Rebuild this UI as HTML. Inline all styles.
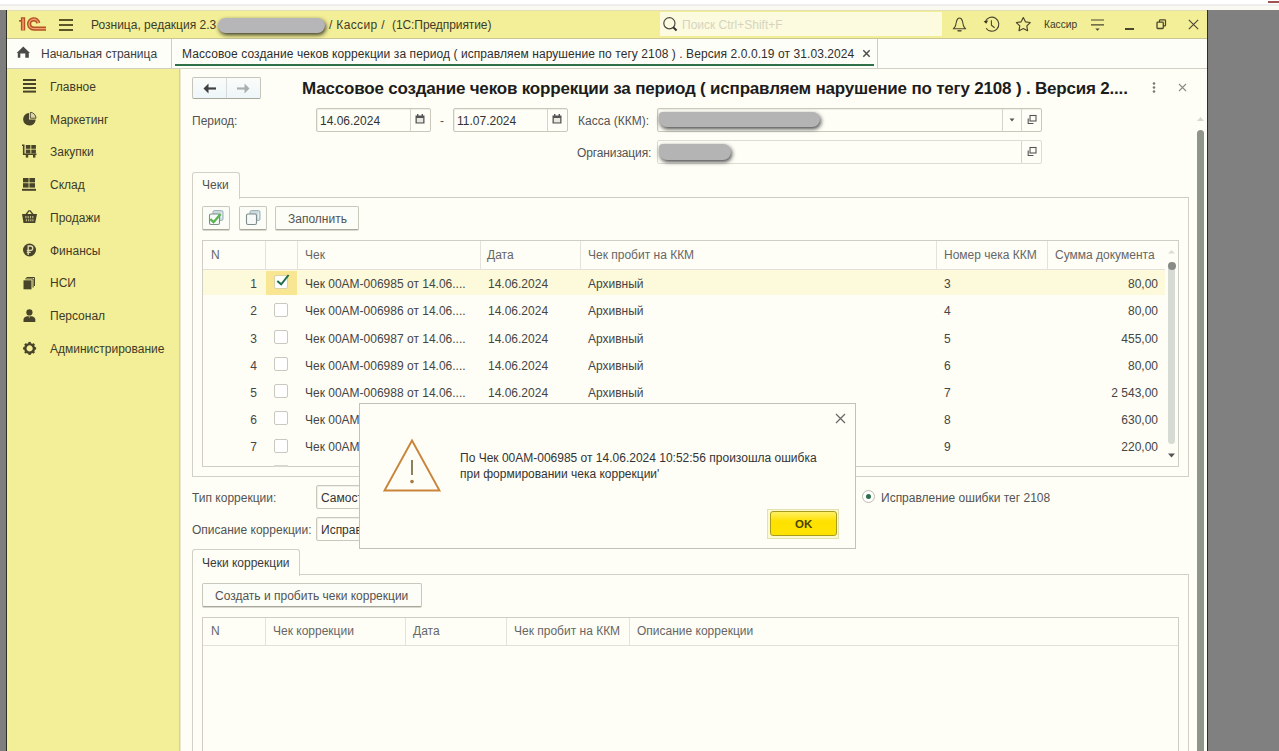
<!DOCTYPE html>
<html><head><meta charset="utf-8">
<style>
*{margin:0;padding:0;box-sizing:border-box}
html,body{width:1279px;height:751px;overflow:hidden;background:#fff}
body{position:relative;font-family:"Liberation Sans",sans-serif;font-size:12px;color:#535353}
.a{position:absolute}
.t{position:absolute;white-space:pre;line-height:14px}
.fld{border:1px solid #cac8bb;border-radius:2px;background:#fefef6;box-shadow:inset 1px 1px 0 #efeee6}
.btn{border:1px solid #c9c8bd;border-bottom-color:#a9a89c;border-radius:2px;background:#fdfdf7;box-shadow:0 1px 0 #d9d8ce}
.chk{width:14px;height:14px;border:1px solid #c9c9c0;border-radius:2px;background:#fff}
.blob{border-radius:4px 8px 8px 8px;background:#b4b4b4;box-shadow:1px 2px 4px #444}
</style></head><body>
<!-- top strip -->
<div class="a" style="left:0;top:4px;width:1279px;height:2px;background:#eeeeee"></div>
<div class="a" style="left:1268px;top:1px;width:11px;height:2px;background:#a05252"></div>
<!-- left gray -->
<div class="a" style="left:0;top:10px;width:6px;height:741px;background:#7e7e7e"></div>
<div class="a" style="left:6px;top:10px;width:1px;height:741px;background:#2e2e22"></div>
<!-- right gray -->
<div class="a" style="left:1207px;top:10px;width:1px;height:741px;background:#2e2e22"></div>
<div class="a" style="left:1208px;top:10px;width:71px;height:741px;background:#808080"></div>

<!-- header -->
<div class="a" style="left:0;top:6px;width:1279px;height:4px;background:#f9f9f2"></div>
<div class="a" style="left:7px;top:10px;width:1200px;height:29px;background:#f3ee98;border-top:1px solid #e3dfb2;border-bottom:1px solid #c9c597"></div>

<!-- 1C logo -->
<svg class="a" style="left:14px;top:12px" width="40" height="24" viewBox="14 12 40 24">
  <path d="M19.1 19.9 H20.9 V17.3 H25.2 V30.6 H20.9 V21.7 H19.1Z" fill="#b4551f"/>
  <rect x="22.3" y="18.6" width="1.5" height="12" fill="#f59b7c"/>
  <path d="M33.65 28.6 A4.65 4.65 0 1 1 38.3 23.2 M33.5 28.6 H46" fill="none" stroke="#b4551f" stroke-width="4.2"/>
  <path d="M33.65 28.6 A4.65 4.65 0 1 1 38.3 23.2 M33.5 28.6 H46" fill="none" stroke="#f59b7c" stroke-width="1.4"/>
</svg>
<!-- hamburger -->
<div class="a" style="left:59px;top:19px;width:14px;height:1.5px;background:#5d5627"></div>
<div class="a" style="left:59px;top:24px;width:14px;height:1.5px;background:#5d5627"></div>
<div class="a" style="left:59px;top:29px;width:14px;height:1.5px;background:#5d5627"></div>
<div class="t" style="left:91px;top:18px;color:#3e3b28">Розница, редакция 2.3</div>
<div class="a" style="left:218px;top:18px;width:107px;height:15px;border-radius:8px;background:#b6b6b8;box-shadow:1px 2px 4px #3a3a28"></div>
<div class="t" style="left:329px;top:18px;color:#3e3b28;letter-spacing:0.35px">/ Кассир /</div>
<div class="t" style="left:392px;top:18px;color:#3e3b28;letter-spacing:-0.08px">(1С:Предприятие)</div>
<!-- search -->
<div class="a" style="left:660px;top:12px;width:282px;height:24px;background:#fcfbdf"></div>
<svg class="a" style="left:662px;top:16px" width="16" height="16" viewBox="0 0 16 16"><circle cx="7.4" cy="7.3" r="5.6" fill="none" stroke="#4a4a44" stroke-width="1.2"/><path d="M11.2 11.2 L14.6 14.4" stroke="#333" stroke-width="2"/></svg>
<div class="t" style="left:682px;top:18px;color:#d6d4c0">Поиск Ctrl+Shift+F</div>
<!-- right icons -->
<svg class="a" style="left:952px;top:17px" width="15" height="16" viewBox="0 0 15 16"><path d="M7.5 1 C6.2 1 5.2 2 4.6 4 L3.6 8.5 C3.2 10 2.5 10.8 1.3 11.8 H13.7 C12.5 10.8 11.8 10 11.4 8.5 L10.4 4 C9.8 2 8.8 1 7.5 1Z" fill="none" stroke="#4a4630" stroke-width="1.1" stroke-linejoin="round"/><path d="M5.5 13.8 H9.5" stroke="#4a4630" stroke-width="1.4"/></svg>
<svg class="a" style="left:980px;top:14px" width="22" height="20" viewBox="980 14 22 20"><path d="M985.27 21.69 A7 7 0 1 1 986.07 28.22" fill="none" stroke="#4a4630" stroke-width="1.15"/><path d="M983.6 21.2 L988.2 20.6 L986.2 23.8Z" fill="#3a3620"/><path d="M991.4 20.2 V25.2 L994.6 27.8" fill="none" stroke="#4a4630" stroke-width="1.1"/></svg>
<svg class="a" style="left:1014px;top:15px" width="18" height="18" viewBox="1014 15 18 18"><path d="M1023.30 17.50 L1025.47 21.81 L1030.24 22.54 L1026.82 25.94 L1027.59 30.71 L1023.30 28.50 L1019.01 30.71 L1019.78 25.94 L1016.36 22.54 L1021.13 21.81Z" fill="none" stroke="#4a4630" stroke-width="1.15" stroke-linejoin="round"/></svg>
<div class="t" style="left:1044px;top:18px;font-size:10.2px;color:#3e3b28">Кассир</div>
<svg class="a" style="left:1090px;top:18px" width="15" height="14" viewBox="0 0 15 14"><path d="M1 2 H14 M1 6.8 H14" stroke="#4a4630" stroke-width="1.2"/><path d="M5.3 10.5 H9.7 L7.5 12.8Z" fill="#4a4630"/></svg>
<div class="a" style="left:1125px;top:28px;width:9px;height:1.5px;background:#4a4630"></div>
<svg class="a" style="left:1156px;top:19px" width="11" height="11" viewBox="0 0 11 11"><path d="M3.5 3 V1.5 Q3.5 0.8 4.2 0.8 H8.8 Q9.5 0.8 9.5 1.5 V6.2 Q9.5 6.9 8.8 6.9 H7.5" fill="none" stroke="#4a4630" stroke-width="1.2"/><rect x="1" y="3.2" width="6.3" height="6.3" rx="0.8" fill="none" stroke="#4a4630" stroke-width="1.3"/></svg>
<svg class="a" style="left:1188px;top:19px" width="11" height="11" viewBox="0 0 11 11"><path d="M0.8 0.8 L10.2 10.2 M10.2 0.8 L0.8 10.2" stroke="#4a4630" stroke-width="1.1"/></svg>


<!-- tab bar -->
<div class="a" style="left:7px;top:39px;width:1200px;height:30px;background:#fefef8;border-bottom:1px solid #d2d0c4"></div>


<!-- tab bar content -->
<svg class="a" style="left:16px;top:46px" width="15" height="13" viewBox="0 0 15 13"><path d="M7.3 0.6 L14 6.9 H12.8 V11.8 H9.3 V7.4 H4.3 V11.8 H1.8 V6.9 H0.6Z" fill="#4a4a48"/></svg>
<div class="t" style="left:41px;top:47px;color:#3c3c3c">Начальная страница</div>
<div class="a" style="left:171px;top:39px;width:1px;height:29px;background:#cfcdc2"></div>
<div class="t" style="left:182px;top:47px;color:#2e2e2e;letter-spacing:0.08px">Массовое создание чеков коррекции за период ( исправляем нарушение по тегу 2108 ) . Версия 2.0.0.19 от 31.03.2024</div>
<svg class="a" style="left:862px;top:49px" width="9" height="9" viewBox="0 0 9 9"><path d="M1.3 1.3 L7.7 7.7 M7.7 1.3 L1.3 7.7" stroke="#4e4e4e" stroke-width="1.5"/></svg>
<div class="a" style="left:877px;top:39px;width:1px;height:29px;background:#cfcdc2"></div>
<div class="a" style="left:175px;top:64px;width:699px;height:2px;background:#2f7048"></div>
<!-- sidebar -->
<div class="a" style="left:7px;top:69px;width:173px;height:682px;background:#f3ee98;border-right:1px solid #d3d0a2"></div>


<!-- sidebar items -->
<div class="t" style="left:50px;top:80px;color:#3e3b28">Главное</div>
<div class="t" style="left:50px;top:113px;color:#3e3b28">Маркетинг</div>
<div class="t" style="left:50px;top:145px;color:#3e3b28">Закупки</div>
<div class="t" style="left:50px;top:178px;color:#3e3b28">Склад</div>
<div class="t" style="left:50px;top:211px;color:#3e3b28">Продажи</div>
<div class="t" style="left:50px;top:244px;color:#3e3b28">Финансы</div>
<div class="t" style="left:50px;top:276px;color:#3e3b28">НСИ</div>
<div class="t" style="left:50px;top:309px;color:#3e3b28">Персонал</div>
<div class="t" style="left:50px;top:342px;color:#3e3b28">Администрирование</div>

<!-- sidebar icons -->
<svg class="a" style="left:22px;top:78px" width="16" height="16" viewBox="0 0 16 16"><g fill="#48442a"><rect x="1" y="1" width="13" height="2"/><rect x="1" y="5" width="13" height="2"/><rect x="1" y="9" width="13" height="2"/><rect x="1" y="12.6" width="13" height="2"/></g></svg>
<svg class="a" style="left:22px;top:111px" width="16" height="16" viewBox="0 0 16 16"><path d="M7 2 A6.3 6.3 0 1 0 13.7 8.6 H7Z" fill="#48442a"/><path d="M8.3 1.3 A6 6 0 0 1 14 7.2 H8.3Z" fill="#dcd7a8" stroke="#48442a" stroke-width="0.9"/></svg>
<svg class="a" style="left:21px;top:143px" width="17" height="16" viewBox="0 0 17 16"><path d="M1 2.3 H2.7 V11.3 H15.5" fill="none" stroke="#48442a" stroke-width="1.6"/><g fill="#48442a"><rect x="4.8" y="2" width="4.6" height="3.8"/><rect x="10.3" y="2" width="4.6" height="3.8"/><rect x="4.8" y="6.6" width="4.6" height="3.8"/><rect x="10.3" y="6.6" width="4.6" height="3.8"/><rect x="4.8" y="12" width="2.4" height="2.6"/><rect x="12" y="12" width="2.4" height="2.6"/></g></svg>
<svg class="a" style="left:22px;top:177px" width="16" height="16" viewBox="0 0 16 16"><g fill="#48442a"><rect x="1" y="1" width="5.6" height="4.4"/><rect x="7.4" y="1" width="5.6" height="4.4"/><rect x="1" y="6.2" width="5.6" height="4.4"/><rect x="7.4" y="6.2" width="5.6" height="4.4"/><rect x="0" y="11.8" width="14" height="2"/></g></svg>
<svg class="a" style="left:21px;top:209px" width="17" height="16" viewBox="0 0 17 16"><path d="M5 5.5 L7.8 1.8 H9.2 L12 5.5" fill="none" stroke="#48442a" stroke-width="1.3"/><path d="M1 5 H16 L14.2 14 H2.5Z" fill="#48442a"/><g fill="#b9b48a"><rect x="4.3" y="7" width="1.2" height="2.3"/><rect x="6.6" y="7" width="1.2" height="2.3"/><rect x="8.9" y="7" width="1.2" height="2.3"/><rect x="11.2" y="7" width="1.2" height="2.3"/><rect x="4.8" y="10.3" width="1.2" height="2"/><rect x="7" y="10.3" width="1.2" height="2"/><rect x="9.2" y="10.3" width="1.2" height="2"/><rect x="11.3" y="10.3" width="1.2" height="2"/></g></svg>
<svg class="a" style="left:22px;top:242px" width="16" height="16" viewBox="0 0 16 16"><circle cx="7.5" cy="8" r="6.5" fill="#48442a"/><path d="M6.2 13 V4 H8.6 A2.1 2.1 0 0 1 8.6 8.3 H4.8 M4.8 10.3 H8.6" fill="none" stroke="#e2ddb0" stroke-width="1.3"/></svg>
<svg class="a" style="left:22px;top:275px" width="16" height="16" viewBox="0 0 16 16"><path d="M4.5 2.5 H12.5 V11" fill="none" stroke="#48442a" stroke-width="1"/><path d="M3.2 3.9 H11.1 V12.6" fill="none" stroke="#48442a" stroke-width="1"/><rect x="1.5" y="5.3" width="8" height="9" fill="#48442a"/></svg>
<svg class="a" style="left:22px;top:307px" width="16" height="16" viewBox="0 0 16 16"><circle cx="7.4" cy="5.4" r="3.1" fill="#48442a"/><path d="M1.5 15 V12.5 C1.5 10.8 3.5 9.3 5.5 9.3 H9.3 C11.3 9.3 13.3 10.8 13.3 12.5 V15Z" fill="#48442a"/><path d="M6.3 9.3 L7.4 11 L8.5 9.3" fill="#b9b48a"/></svg>
<svg class="a" style="left:22px;top:341px" width="16" height="16" viewBox="0 0 16 16"><g transform="translate(7.6 7.4)"><circle r="4.3" fill="none" stroke="#48442a" stroke-width="2.4"/><g fill="#48442a"><rect x="-1.2" y="-6.5" width="2.4" height="3"/><rect x="-1.2" y="-6.5" width="2.4" height="3" transform="rotate(45)"/><rect x="-1.2" y="-6.5" width="2.4" height="3" transform="rotate(90)"/><rect x="-1.2" y="-6.5" width="2.4" height="3" transform="rotate(135)"/><rect x="-1.2" y="-6.5" width="2.4" height="3" transform="rotate(180)"/><rect x="-1.2" y="-6.5" width="2.4" height="3" transform="rotate(225)"/><rect x="-1.2" y="-6.5" width="2.4" height="3" transform="rotate(270)"/><rect x="-1.2" y="-6.5" width="2.4" height="3" transform="rotate(315)"/></g></g></svg>
<!-- content -->
<div class="a" style="left:180px;top:69px;width:1px;height:682px;background:#ebe9cf"></div>
<div class="a" style="left:181px;top:69px;width:1026px;height:682px;background:#fefef6"></div>


<!-- ===== form header ===== -->
<div class="a" style="left:192px;top:77px;width:69px;height:22px;border:1px solid #c6c5bb;border-bottom-color:#a9a89e;border-radius:2px;background:linear-gradient(#fbfcfa,#eef6f9)"></div>
<div class="a" style="left:226px;top:78px;width:1px;height:20px;background:#d6dad8"></div>
<svg class="a" style="left:203px;top:83px" width="14" height="11" viewBox="0 0 14 11"><path d="M13 5.5 H4" stroke="#404040" stroke-width="2.2"/><path d="M0.5 5.5 L5.5 0.6 V10.4Z" fill="#404040"/></svg>
<svg class="a" style="left:236px;top:83px" width="14" height="11" viewBox="0 0 14 11"><path d="M1 5.5 H10" stroke="#a9afaf" stroke-width="2.2"/><path d="M13.5 5.5 L8.5 0.6 V10.4Z" fill="#a9afaf"/></svg>
<div class="t" style="left:302px;top:79px;font-size:17px;font-weight:bold;line-height:20px;color:#1c1c1c;letter-spacing:-0.19px">Массовое создание чеков коррекции за период ( исправляем нарушение по тегу 2108 ) . Версия 2....</div>
<svg class="a" style="left:1152px;top:81px" width="4" height="13" viewBox="0 0 4 13"><circle cx="2" cy="2.5" r="1.3" fill="#777"/><circle cx="2" cy="6.5" r="1.3" fill="#777"/><circle cx="2" cy="10.5" r="1.3" fill="#777"/></svg>
<svg class="a" style="left:1178px;top:83px" width="9" height="9" viewBox="0 0 9 9"><path d="M1 1 L8 8 M8 1 L1 8" stroke="#8a8a8a" stroke-width="1.1"/></svg>

<div class="t" style="left:192px;top:114px">Период:</div>
<div class="a fld" style="left:316px;top:108px;width:115px;height:24px"></div>
<div class="a" style="left:410px;top:109px;width:1px;height:22px;background:#d6d4c8"></div>
<div class="t" style="left:320px;top:114px;color:#333">14.06.2024</div>
<svg class="a cal" style="left:415px;top:114px" width="10" height="10" viewBox="0 0 10 10"><rect x="0.5" y="1.5" width="9" height="8" fill="#555"/><rect x="1.8" y="4" width="6.4" height="4.4" fill="#e9e8e0"/><rect x="2" y="0" width="1.4" height="2.5" fill="#555"/><rect x="6.6" y="0" width="1.4" height="2.5" fill="#555"/></svg>
<div class="t" style="left:440px;top:114px">-</div>
<div class="a fld" style="left:453px;top:108px;width:115px;height:24px"></div>
<div class="a" style="left:547px;top:109px;width:1px;height:22px;background:#d6d4c8"></div>
<div class="t" style="left:457px;top:114px;color:#333">11.07.2024</div>
<svg class="a cal" style="left:552px;top:114px" width="10" height="10" viewBox="0 0 10 10"><rect x="0.5" y="1.5" width="9" height="8" fill="#555"/><rect x="1.8" y="4" width="6.4" height="4.4" fill="#e9e8e0"/><rect x="2" y="0" width="1.4" height="2.5" fill="#555"/><rect x="6.6" y="0" width="1.4" height="2.5" fill="#555"/></svg>

<div class="t" style="left:578px;top:114px">Касса (ККМ):</div>
<div class="a fld" style="left:657px;top:108px;width:385px;height:24px"></div>
<div class="a" style="left:1002px;top:109px;width:1px;height:22px;background:#d6d4c8"></div>
<div class="a" style="left:1021px;top:109px;width:1px;height:22px;background:#d6d4c8"></div>
<svg class="a" style="left:1009px;top:118px" width="6" height="4" viewBox="0 0 6 4"><path d="M0.5 0.5 H5.5 L3 3.5Z" fill="#555"/></svg>
<svg class="a opn" style="left:1027px;top:114px" width="11" height="11" viewBox="0 0 11 11"><rect x="3" y="1.5" width="6" height="5.5" fill="none" stroke="#555" stroke-width="1.1"/><path d="M1.2 4.5 V9.5 H6.5" fill="none" stroke="#555" stroke-width="1.1"/></svg>
<div class="a blob" style="left:659px;top:112px;width:161px;height:15px"></div>

<div class="t" style="left:577px;top:146px;letter-spacing:-0.12px">Организация:</div>
<div class="a fld" style="left:657px;top:140px;width:385px;height:24px;border-color:#dddcd2;box-shadow:none"></div>
<div class="a" style="left:1021px;top:141px;width:1px;height:22px;background:#d6d4c8"></div>
<svg class="a opn" style="left:1027px;top:146px" width="11" height="11" viewBox="0 0 11 11"><rect x="3" y="1.5" width="6" height="5.5" fill="none" stroke="#555" stroke-width="1.1"/><path d="M1.2 4.5 V9.5 H6.5" fill="none" stroke="#555" stroke-width="1.1"/></svg>
<div class="a blob" style="left:659px;top:144px;width:72px;height:16px"></div>

<!-- outer scrollbar -->
<svg class="a" style="left:1196px;top:116px" width="9" height="6" viewBox="0 0 9 6"><path d="M1 5 L4.5 1 L8 5Z" fill="#d8d8d0"/></svg>
<div class="a" style="left:1197px;top:130px;width:7px;height:621px;border-radius:3.5px 3.5px 0 0;background:#8f958a"></div>

<!-- ===== panel 1 ===== -->
<div class="a" style="left:192px;top:197px;width:997px;height:280px;border:1px solid #d3d1c6;border-top-color:#cfcdc2"></div>
<div class="a" style="left:192px;top:172px;width:48px;height:27px;border:1px solid #d3d1c6;border-bottom:none;border-radius:3px 3px 0 0;background:#fefef6"></div>
<div class="t" style="left:202px;top:178px">Чеки</div>

<div class="a btn" style="left:202px;top:206px;width:28px;height:24px"></div>
<div class="a btn" style="left:239px;top:206px;width:28px;height:24px"></div>
<div class="a btn" style="left:275px;top:206px;width:84px;height:24px"></div>
<div class="t" style="left:288px;top:212px">Заполнить</div>
<svg class="a" style="left:208px;top:209px" width="17" height="17" viewBox="0 0 17 17"><rect x="5" y="1.5" width="10" height="10" rx="1.5" fill="#c9d9dc" stroke="#9fb3b6" stroke-width="1"/><path d="M13.3 3.5 V9.5" stroke="#f2f6f6" stroke-width="1"/><rect x="1.5" y="5" width="10" height="10.5" rx="1.5" fill="#f6f9f8" stroke="#7d8c8c" stroke-width="1.1"/><path d="M2.3 10.2 L5.6 13.2 L12.6 5" fill="none" stroke="#58b44c" stroke-width="2.3"/></svg>
<svg class="a" style="left:245px;top:209px" width="17" height="17" viewBox="0 0 17 17"><rect x="5" y="1.5" width="10" height="10" rx="1.5" fill="#c9d9dc" stroke="#9fb3b6" stroke-width="1"/><path d="M13.3 3.5 V9.5" stroke="#f2f6f6" stroke-width="1"/><rect x="1.5" y="5" width="10" height="10.5" rx="1.5" fill="#f6f9f8" stroke="#7d8c8c" stroke-width="1.1"/></svg>

<!-- table 1 -->
<div class="a" style="left:202px;top:240px;width:977px;height:227px;border:1px solid #cfcdc4;background:#fefef6"></div>
<div class="a" style="left:203px;top:269px;width:962px;height:1px;background:#e2e0d8"></div>
<div class="a" style="left:265px;top:241px;width:1px;height:28px;background:#e4e2da"></div>
<div class="a" style="left:297px;top:241px;width:1px;height:28px;background:#e4e2da"></div>
<div class="a" style="left:480px;top:241px;width:1px;height:28px;background:#e4e2da"></div>
<div class="a" style="left:580px;top:241px;width:1px;height:28px;background:#e4e2da"></div>
<div class="a" style="left:936px;top:241px;width:1px;height:28px;background:#e4e2da"></div>
<div class="a" style="left:1047px;top:241px;width:1px;height:28px;background:#e4e2da"></div>
<div class="t" style="left:211px;top:248px;color:#666">N</div>
<div class="t" style="left:305px;top:248px;color:#666">Чек</div>
<div class="t" style="left:487px;top:248px;color:#666">Дата</div>
<div class="t" style="left:588px;top:248px;color:#666">Чек пробит на ККМ</div>
<div class="t" style="left:944px;top:248px;color:#666">Номер чека ККМ</div>
<div class="t" style="left:1055px;top:248px;color:#666">Сумма документа</div>
<div class="a" style="left:203px;top:270px;width:962px;height:25px;background:#fcfada"></div>
<div class="a" style="left:266px;top:271px;width:31px;height:24px;background:#f8e692"></div>
<div class="t" style="left:203px;top:277px;width:54px;text-align:right;color:#454545">1</div>
<div class="a chk" style="left:274px;top:275px;border-color:#d9d2a6"></div>
<svg class="a" style="left:275px;top:273px" width="16" height="14" viewBox="0 0 16 14"><path d="M2.3 7.9 L6.2 11.3 L13.6 2" fill="none" stroke="#1e6e48" stroke-width="2"/></svg>
<div class="t" style="left:305px;top:277px;color:#454545">Чек 00AM-006985 от 14.06....</div>
<div class="t" style="left:488px;top:277px;color:#454545">14.06.2024</div>
<div class="t" style="left:588px;top:277px;color:#454545">Архивный</div>
<div class="t" style="left:944px;top:277px;color:#454545">3</div>
<div class="t" style="left:1056px;top:277px;width:102px;text-align:right;color:#454545">80,00</div>
<div class="t" style="left:203px;top:304px;width:54px;text-align:right;color:#454545">2</div>
<div class="a chk" style="left:274px;top:303px"></div>
<div class="t" style="left:305px;top:304px;color:#454545">Чек 00AM-006986 от 14.06....</div>
<div class="t" style="left:488px;top:304px;color:#454545">14.06.2024</div>
<div class="t" style="left:588px;top:304px;color:#454545">Архивный</div>
<div class="t" style="left:944px;top:304px;color:#454545">4</div>
<div class="t" style="left:1056px;top:304px;width:102px;text-align:right;color:#454545">80,00</div>
<div class="t" style="left:203px;top:332px;width:54px;text-align:right;color:#454545">3</div>
<div class="a chk" style="left:274px;top:330px"></div>
<div class="t" style="left:305px;top:332px;color:#454545">Чек 00AM-006987 от 14.06....</div>
<div class="t" style="left:488px;top:332px;color:#454545">14.06.2024</div>
<div class="t" style="left:588px;top:332px;color:#454545">Архивный</div>
<div class="t" style="left:944px;top:332px;color:#454545">5</div>
<div class="t" style="left:1056px;top:332px;width:102px;text-align:right;color:#454545">455,00</div>
<div class="t" style="left:203px;top:359px;width:54px;text-align:right;color:#454545">4</div>
<div class="a chk" style="left:274px;top:357px"></div>
<div class="t" style="left:305px;top:359px;color:#454545">Чек 00AM-006989 от 14.06....</div>
<div class="t" style="left:488px;top:359px;color:#454545">14.06.2024</div>
<div class="t" style="left:588px;top:359px;color:#454545">Архивный</div>
<div class="t" style="left:944px;top:359px;color:#454545">6</div>
<div class="t" style="left:1056px;top:359px;width:102px;text-align:right;color:#454545">80,00</div>
<div class="t" style="left:203px;top:386px;width:54px;text-align:right;color:#454545">5</div>
<div class="a chk" style="left:274px;top:384px"></div>
<div class="t" style="left:305px;top:386px;color:#454545">Чек 00AM-006988 от 14.06....</div>
<div class="t" style="left:488px;top:386px;color:#454545">14.06.2024</div>
<div class="t" style="left:588px;top:386px;color:#454545">Архивный</div>
<div class="t" style="left:944px;top:386px;color:#454545">7</div>
<div class="t" style="left:1056px;top:386px;width:102px;text-align:right;color:#454545">2 543,00</div>
<div class="t" style="left:203px;top:413px;width:54px;text-align:right;color:#454545">6</div>
<div class="a chk" style="left:274px;top:411px"></div>
<div class="t" style="left:305px;top:413px;color:#454545">Чек 00AM-006990 от 14.06....</div>
<div class="t" style="left:488px;top:413px;color:#454545">14.06.2024</div>
<div class="t" style="left:588px;top:413px;color:#454545">Архивный</div>
<div class="t" style="left:944px;top:413px;color:#454545">8</div>
<div class="t" style="left:1056px;top:413px;width:102px;text-align:right;color:#454545">630,00</div>
<div class="t" style="left:203px;top:440px;width:54px;text-align:right;color:#454545">7</div>
<div class="a chk" style="left:274px;top:439px"></div>
<div class="t" style="left:305px;top:440px;color:#454545">Чек 00AM-006991 от 14.06....</div>
<div class="t" style="left:488px;top:440px;color:#454545">14.06.2024</div>
<div class="t" style="left:588px;top:440px;color:#454545">Архивный</div>
<div class="t" style="left:944px;top:440px;color:#454545">9</div>
<div class="t" style="left:1056px;top:440px;width:102px;text-align:right;color:#454545">220,00</div>
<div class="a" style="left:274px;top:465px;width:14px;height:2px;background:#d8d8d0"></div>
<!-- table scroll -->
<svg class="a" style="left:1167px;top:249px" width="9" height="5" viewBox="0 0 9 5"><path d="M1 4.5 L4.5 1 L8 4.5Z" fill="#dcdcd4"/></svg>
<div class="a" style="left:1168px;top:262px;width:7px;height:182px;border-radius:3.5px;background:#d6dbd3"></div>
<div class="a" style="left:1167.5px;top:262px;width:8px;height:8px;border-radius:4px;background:#8a8c88"></div>
<svg class="a" style="left:1167px;top:453px" width="9" height="5" viewBox="0 0 9 5"><path d="M1 0.5 H8 L4.5 4.5Z" fill="#555"/></svg>

<!-- ===== lower form ===== -->
<div class="t" style="left:192px;top:491px">Тип коррекции:</div>
<div class="a fld" style="left:316px;top:485px;width:120px;height:24px"></div>
<div class="t" style="left:321px;top:491px;color:#333">Самостоятельно</div>
<div class="t" style="left:192px;top:523px">Описание коррекции:</div>
<div class="a fld" style="left:316px;top:517px;width:120px;height:24px"></div>
<div class="t" style="left:321px;top:523px;color:#333">Исправление</div>
<div class="a" style="left:862px;top:490px;width:13px;height:13px;border:1px solid #bdbcb2;border-radius:50%;background:#fff"></div>
<div class="a" style="left:866px;top:494px;width:5px;height:5px;border-radius:50%;background:#2d6f4a"></div>
<div class="t" style="left:881px;top:491px">Исправление ошибки тег 2108</div>

<!-- ===== panel 2 ===== -->
<div class="a" style="left:192px;top:574px;width:997px;height:190px;border:1px solid #d3d1c6"></div>
<div class="a" style="left:192px;top:549px;width:108px;height:27px;border:1px solid #d3d1c6;border-bottom:none;border-radius:3px 3px 0 0;background:#fefef6"></div>
<div class="t" style="left:202px;top:556px;color:#3a3a3a">Чеки коррекции</div>
<div class="a btn" style="left:202px;top:583px;width:220px;height:24px"></div>
<div class="t" style="left:215px;top:589px">Создать и пробить чеки коррекции</div>
<div class="a" style="left:202px;top:617px;width:977px;height:150px;border:1px solid #cfcdc4;background:#fefef6"></div>
<div class="a" style="left:203px;top:645px;width:975px;height:1px;background:#e2e0d8"></div>
<div class="a" style="left:265px;top:618px;width:1px;height:27px;background:#e4e2da"></div>
<div class="a" style="left:405px;top:618px;width:1px;height:27px;background:#e4e2da"></div>
<div class="a" style="left:506px;top:618px;width:1px;height:27px;background:#e4e2da"></div>
<div class="a" style="left:629px;top:618px;width:1px;height:27px;background:#e4e2da"></div>
<div class="t" style="left:211px;top:624px;color:#666">N</div>
<div class="t" style="left:273px;top:624px;color:#666">Чек коррекции</div>
<div class="t" style="left:413px;top:624px;color:#666">Дата</div>
<div class="t" style="left:514px;top:624px;color:#666">Чек пробит на ККМ</div>
<div class="t" style="left:637px;top:624px;color:#666">Описание коррекции</div>

<!-- ===== dialog ===== -->
<div class="a" style="left:359px;top:403px;width:497px;height:146px;border:1px solid #c3c2b8;background:#fefef6"></div>
<svg class="a" style="left:835px;top:413px" width="11" height="11" viewBox="0 0 11 11"><path d="M1 1 L10 10 M10 1 L1 10" stroke="#666" stroke-width="1.2"/></svg>
<svg class="a" style="left:382px;top:438px" width="60" height="55" viewBox="0 0 60 55"><path d="M30 2.5 L57.5 52.5 H2.5Z" fill="none" stroke="#c9843a" stroke-width="1.9" stroke-linejoin="miter"/><path d="M30 22 V37" stroke="#7b6a42" stroke-width="1.7"/><circle cx="30" cy="43.6" r="1.8" fill="#a67a48"/></svg>
<div class="t" style="left:460px;top:451px;color:#333">По Чек 00AM-006985 от 14.06.2024 10:52:56 произошла ошибка</div>
<div class="t" style="left:460px;top:467px;color:#333">при формировании чека коррекции'</div>
<div class="a" style="left:767px;top:509px;width:72px;height:30px;border:1px solid #e4e1b0;background:#fbf9cf"></div>
<div class="a" style="left:770px;top:511px;width:67px;height:25px;border:1px solid #a99b1c;border-radius:3px;background:linear-gradient(#fff064,#ffe100 40%,#ffe300)"></div>
<div class="t" style="left:795px;top:517px;font-weight:bold;font-size:11.5px;color:#4a4200">OK</div>

</body></html>
